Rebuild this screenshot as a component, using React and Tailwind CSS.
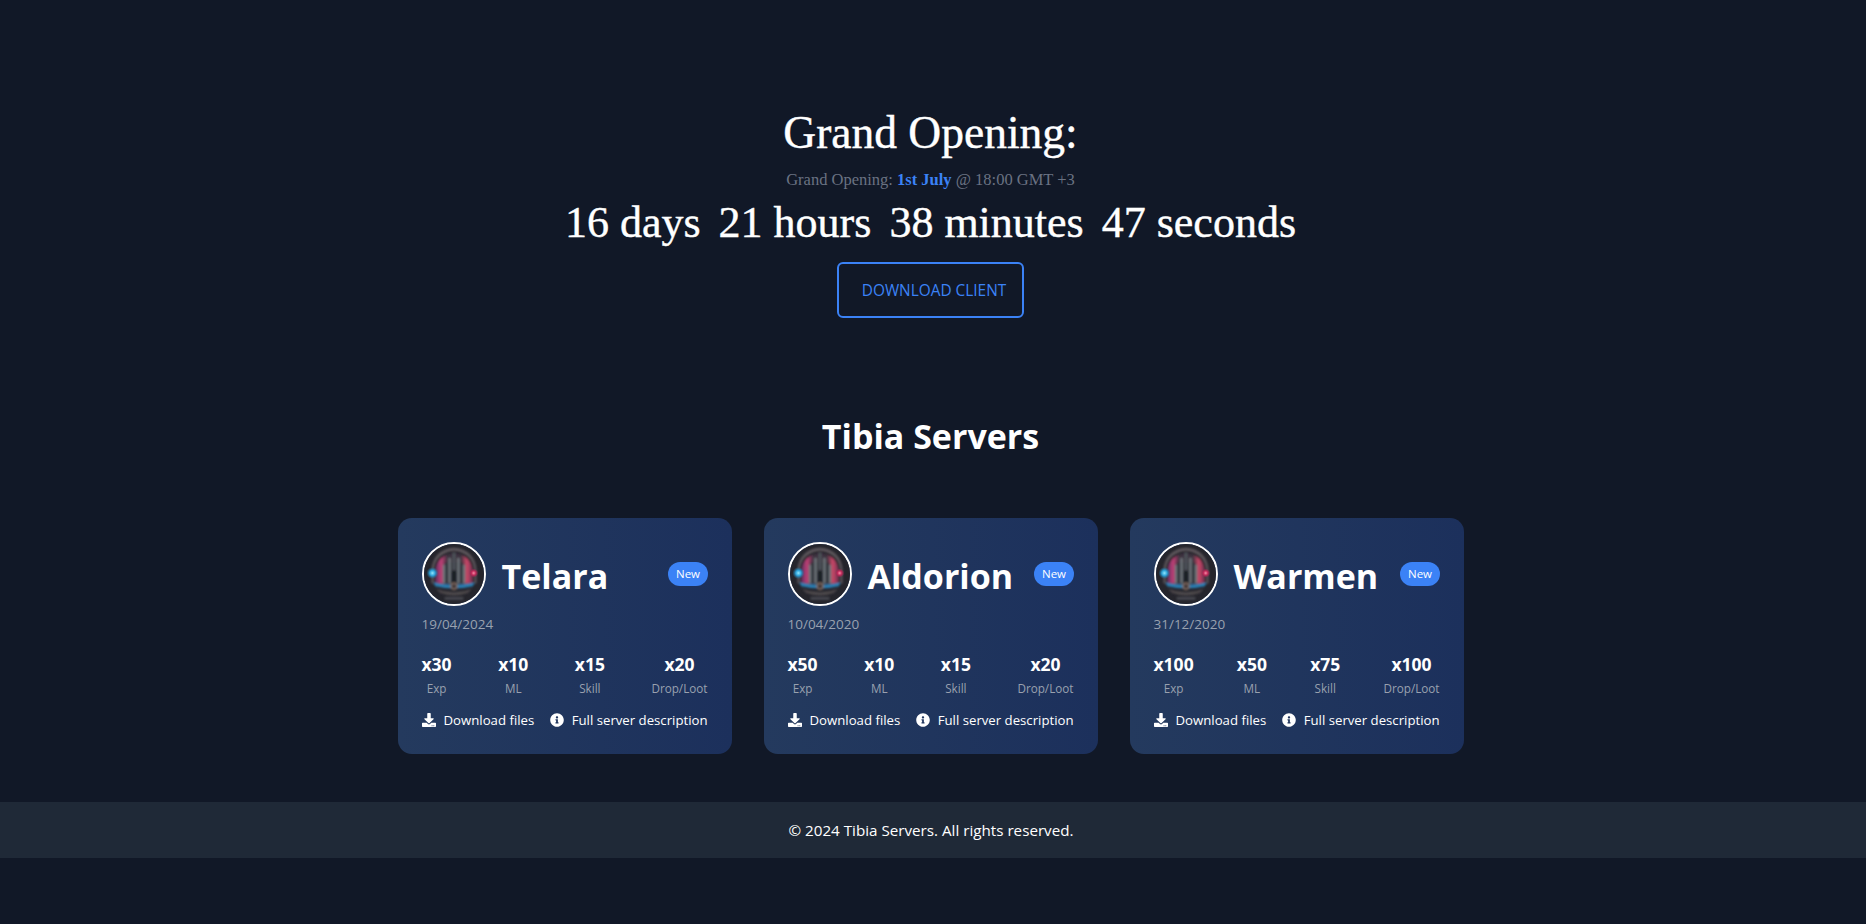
import React from "react";
import { FaDownload, FaInfoCircle } from "react-icons/fa";

const servers = [
  { name: "Telara", date: "19/04/2024", exp: "x30", ml: "x10", skill: "x15", loot: "x20" },
  { name: "Aldorion", date: "10/04/2020", exp: "x50", ml: "x10", skill: "x15", loot: "x20" },
  { name: "Warmen", date: "31/12/2020", exp: "x100", ml: "x50", skill: "x75", loot: "x100" },
];

function Logo({ id }) {
  return (
    <svg viewBox="0 0 64 64" className="w-16 h-16 rounded-full border-2 border-white shrink-0">
      <defs>
        <radialGradient id={id + "blue"}>
          <stop offset="0%" stopColor="#8fe6ff" />
          <stop offset="45%" stopColor="#2b9fd6" />
          <stop offset="100%" stopColor="#1f6f9c" stopOpacity="0" />
        </radialGradient>
        <radialGradient id={id + "red"}>
          <stop offset="0%" stopColor="#f58aa5" />
          <stop offset="45%" stopColor="#c42a5c" />
          <stop offset="100%" stopColor="#a01f50" stopOpacity="0" />
        </radialGradient>
        <linearGradient id={id + "arch"} x1="0" y1="0" x2="1" y2="0">
          <stop offset="0%" stopColor="#5a3060" />
          <stop offset="16%" stopColor="#c23f76" />
          <stop offset="32%" stopColor="#3c3340" />
          <stop offset="68%" stopColor="#3c3340" />
          <stop offset="84%" stopColor="#cc4768" />
          <stop offset="100%" stopColor="#6a3050" />
        </linearGradient>
        <filter id={id + "soft"}>
          <feGaussianBlur stdDeviation="1" />
        </filter>
      </defs>
      <rect width="64" height="64" fill="#25252c" />
      <g filter={`url(#${id}soft)`}>
        <path d="M8 42 V28 A24 24 0 0 1 56 28 V42 Z" fill="#5f585d" />
        <path d="M10 42 V29 A22 22 0 0 1 54 29 V42 Z" fill="#2a282f" />
        <path d="M12 42 V30 A20 20 0 0 1 52 30 V42 Z" fill={`url(#${id}arch)`} />
        <path d="M22 42 V20 H42 V42 Z" fill="#30343b" />
        <path d="M20 42 V22 H22.5 V42 Z M26 42 V15 H28.5 V42 Z M35.5 42 V15 H38 V42 Z M41.5 42 V22 H44 V42 Z" fill="#6f767c" />
        <path d="M30.5 42 V9 H33.5 V42 Z" fill="#4f555b" />
        <path d="M29 42 V31 A3 3 0 0 1 35 31 V42 Z" fill="#1c2026" />
        <path d="M10 41 Q32 46 54 41 L52 45 Q32 50 12 45 Z" fill="#2b7fb4" />
        <path d="M13 48 Q32 55 51 48 L47 52 Q32 58 17 52 Z" fill="#4e484b" />
        <circle cx="32" cy="45" r="3.5" fill="#453b3e" stroke="#a98a74" strokeWidth="1" />
        <path d="M22 57 H42 V59 H22 Z" fill="#55575f" />
      </g>
      <circle cx="9" cy="31" r="6.5" fill={`url(#${id}blue)`} />
      <circle cx="53" cy="31" r="5" fill={`url(#${id}red)`} />
    </svg>
  );
}

function Rate({ value, label }) {
  return (
    <div className="flex flex-col items-center">
      <span className="text-[17.5px] font-bold text-white leading-7">{value}</span>
      <span className="mt-[2px] text-[11.7px] text-gray-400 leading-4">{label}</span>
    </div>
  );
}

function ServerCard({ server }) {
  return (
    <div className="w-[334px] h-[236px] rounded-[14px] bg-gradient-to-r from-[#243a5e] to-[#1c305c] p-6">
      <div className="flex items-center justify-between">
        <div className="flex items-center gap-4">
          <Logo id={server.name} />
          <h3 className="pt-1 text-[34px] font-bold text-white">{server.name}</h3>
        </div>
        <span className="rounded-full bg-[#3b82f6] px-[7.5px] py-0.5 text-[11.5px] leading-5 text-white">New</span>
      </div>
      <p className="mt-2 text-[13.5px] leading-5 text-gray-400">{server.date}</p>
      <div className="mt-4 flex justify-between">
        <Rate value={server.exp} label="Exp" />
        <Rate value={server.ml} label="ML" />
        <Rate value={server.skill} label="Skill" />
        <Rate value={server.loot} label="Drop/Loot" />
      </div>
      <div className="mt-[14px] flex justify-between text-[13.2px] leading-5 text-white">
        <span className="flex items-center gap-2"><FaDownload size={14} />Download files</span>
        <span className="flex items-center gap-2"><FaInfoCircle size={14} />Full server description</span>
      </div>
    </div>
  );
}

export default function App() {
  return (
    <div className="min-h-screen bg-[#111827] text-white font-['Open_Sans','Noto_Sans',sans-serif]">
      <section className="flex flex-col items-center pt-[104px] pr-[5px] font-['Liberation_Serif',serif]">
        <h1 className="text-[45.5px] leading-[58px] [-webkit-text-stroke:0.4px_white]">Grand Opening:</h1>
        <p className="mt-[5px] text-[16.5px] leading-[26px] text-gray-500">
          Grand Opening: <span className="font-bold text-[#3b82f6]">1st July</span> @ 18:00 GMT +3
        </p>
        <div className="text-[44px] leading-[60px] flex gap-[18px] [-webkit-text-stroke:0.4px_white]">
          <span>16 days</span>
          <span>21 hours</span>
          <span>38 minutes</span>
          <span>47 seconds</span>
        </div>
        <a className="mt-[9px] rounded-md border-2 border-[#3b82f6] pl-[23px] pr-4 pt-[15px] pb-[13px] font-['Open_Sans','Noto_Sans',sans-serif] text-[15.4px] leading-6 text-[#3b82f6]">DOWNLOAD CLIENT</a>
      </section>
      <h2 className="mt-[98px] pr-[5px] text-center text-[34px] leading-10 font-bold">Tibia Servers</h2>
      <div className="mt-[62px] pr-[5px] flex justify-center gap-8">
        {servers.map((s) => (
          <ServerCard key={s.name} server={s} />
        ))}
      </div>
      <footer className="mt-12 bg-[#1f2937] py-4 pr-1 text-center text-[15.2px] leading-6">
        © 2024 Tibia Servers. All rights reserved.
      </footer>
    </div>
  );
}
